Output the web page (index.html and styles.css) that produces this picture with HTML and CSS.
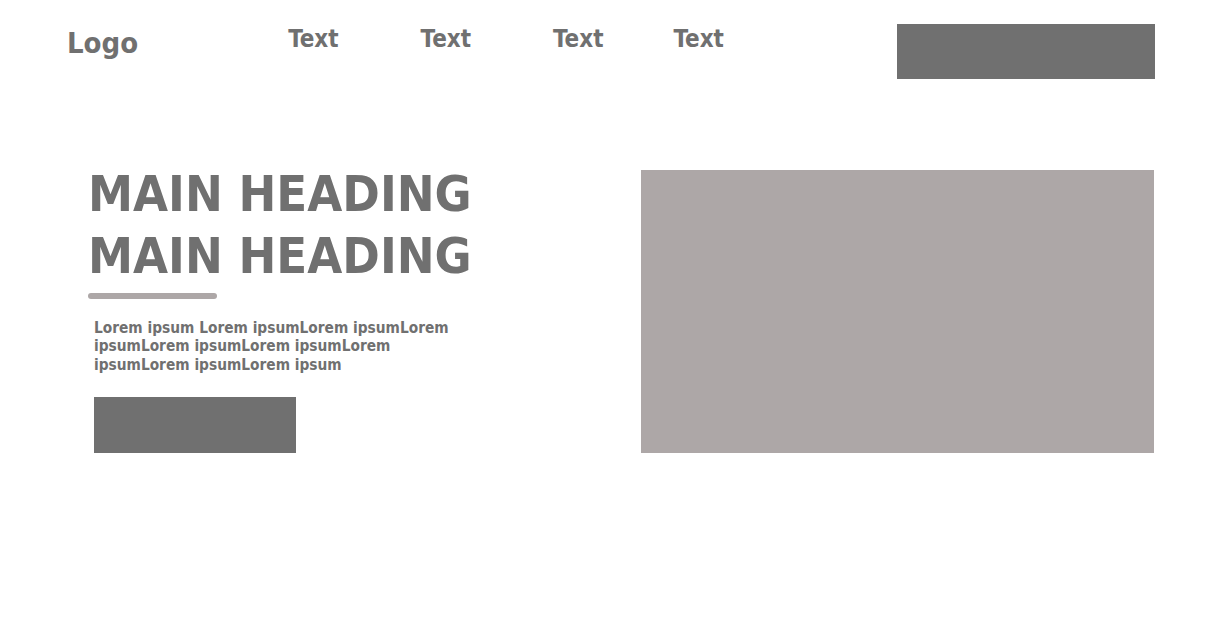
FILE: index.html
```html
<!DOCTYPE html>
<html lang="en">
<head>
<meta charset="utf-8">
<title>Landing</title>
<link rel="stylesheet" href="styles.css">
</head>
<body>
<header class="site-header">
  <div class="logo">Logo</div>
  <nav class="nav">
    <a class="nav-item nav-item-1" href="#">Text</a>
    <a class="nav-item nav-item-2" href="#">Text</a>
    <a class="nav-item nav-item-3" href="#">Text</a>
    <a class="nav-item" href="#">Text</a>
  </nav>
  <div class="header-btn"></div>
</header>
<main class="hero">
  <section class="hero-text">
    <h1 class="heading">MAIN HEADING<br>MAIN HEADING</h1>
    <div class="accent-bar"></div>
    <p class="lead">Lorem ipsum Lorem ipsumLorem ipsumLorem ipsumLorem ipsumLorem ipsumLorem ipsumLorem ipsumLorem ipsum</p>
    <div class="cta"></div>
  </section>
  <div class="hero-image"></div>
</main>
</body>
</html>
```

FILE: styles.css
```css
* { box-sizing: border-box; }
html, body { margin: 0; padding: 0; background: #ffffff; }
body {
  font-family: "DejaVu Sans Condensed", "DejaVu Sans", sans-serif;
  font-weight: bold;
  color: #707070;
  width: 1231px;
  height: 622px;
  overflow: hidden;
}
.site-header {
  display: flex;
  align-items: flex-start;
  padding: 24px 76px 0 67px;
  height: 80px;
}
.logo {
  font-size: 29px;
  line-height: 36px;
  margin-top: 1px;
}
.nav {
  display: flex;
  margin-left: 150px;
  margin-top: 1px;
}
.nav-item {
  font-size: 24px;
  line-height: 28px;
  color: #707070;
  text-decoration: none;
}
.nav-item-1 { margin-right: 82px; }
.nav-item-2 { margin-right: 82px; }
.nav-item-3 { margin-right: 70px; }
.header-btn {
  margin-left: auto;
  width: 258px;
  height: 55px;
  background: #707070;
}
.hero {
  display: flex;
  align-items: flex-start;
  padding: 83px 77px 0 88px;
}
.hero-text { width: 440px; }
.heading {
  margin: 0;
  font-size: 50.3px;
  line-height: 62px;
  font-weight: bold;
  white-space: nowrap;
}
.accent-bar {
  margin-top: 6px;
  width: 129px;
  height: 6px;
  border-radius: 3px;
  background: #ada7a7;
}
.lead {
  margin: 20px 0 0 6px;
  font-size: 15.3px;
  line-height: 18.3px;
  width: 372px;
}
.cta {
  margin: 23px 0 0 6px;
  width: 202px;
  height: 56px;
  background: #707070;
}
.hero-image {
  margin-left: auto;
  margin-top: 7px;
  width: 513px;
  height: 283px;
  background: #ada7a7;
}
```
